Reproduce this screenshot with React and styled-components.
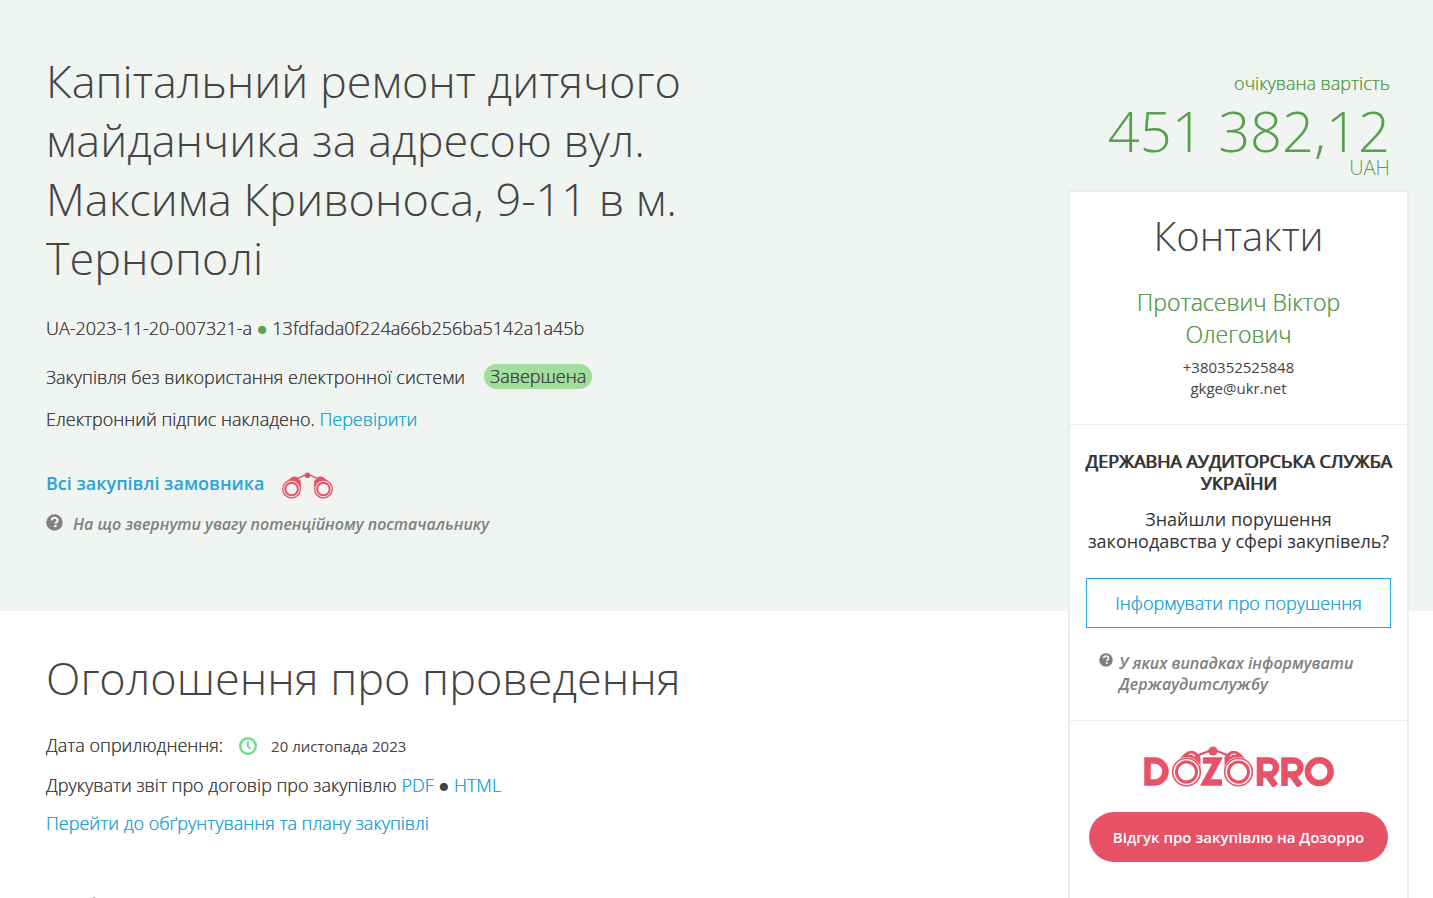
import React from "react";
import styled, { createGlobalStyle, css } from "styled-components";

const GlobalStyle = createGlobalStyle`
  *, *::before, *::after { box-sizing: border-box; }
  body {
    margin: 0;
    background: #fff;
    color: #444;
    font: 400 18px/22px "Open Sans", "Noto Sans", sans-serif;
  }
  h1, h2, h3, p { margin: 0; }
  a { color: #28a4da; text-decoration: none; }
  svg { display: block; flex: none; }
`;

const display = css`
  font-weight: 300;
`;

/* Light face, darkened slightly so it stays readable at text sizes. */
const bodyText = css`
  font-weight: 300;
  text-shadow: 0 0 currentColor;
`;

const Page = styled.div`
  display: grid;
  grid-template-columns: minmax(0, 1fr) 341px;
  grid-template-rows: auto 1fr;
  min-height: 100vh;
  padding-right: 24px;
`;

const HeroBand = styled.div`
  grid-column: 1 / -1;
  grid-row: 1;
  margin-right: -24px;
  background: #f0f5f1;
`;

const Hero = styled.header`
  grid-column: 1;
  grid-row: 1;
  padding: 51px 40px 76px 46px;
`;

const Details = styled.main`
  grid-column: 1;
  grid-row: 2;
  padding: 37px 40px 40px 46px;
`;

const Aside = styled.aside`
  grid-column: 2;
  grid-row: 1 / 3;
  display: flex;
  flex-direction: column;
  padding-top: 72px;
`;

const Title = styled.h1`
  ${display}
  max-width: 660px;
  margin-bottom: 30px;
  font-size: 45px;
  line-height: 59px;
`;

const SectionTitle = styled.h2`
  ${display}
  margin-bottom: ${(p) => p.$gap || 0}px;
  font-size: ${(p) => p.$size || 45}px;
  line-height: 59px;
`;

const Line = styled.p`
  ${bodyText}
  display: flex;
  align-items: ${(p) => p.$align || "center"};
  margin-bottom: ${(p) => p.$gap}px;
  white-space: pre-wrap;
`;

const Dot = styled.span`
  color: ${(p) => (p.$green ? "#5a9f4f" : "inherit")};
`;

const Status = styled.span`
  margin-left: 19px;
  padding: 1px 6px 2px;
  border-radius: 13px;
  background: #a3dd9b;
`;

const OwnerLink = styled.a`
  margin-right: 18px;
  font-weight: 600;
  text-shadow: none;
`;

const Hint = styled.a`
  display: flex;
  align-items: flex-start;
  gap: ${(p) => p.$gap}px;
  padding-left: ${(p) => p.$inset || 0}px;
  color: #808080;
  font-size: 16px;
  font-style: italic;
  font-weight: 600;
  line-height: 21px;
  text-align: left;
`;

const Published = styled.span`
  display: flex;
  align-items: center;
  gap: 14px;
  margin-left: 16px;
  padding-top: 2px;
  font-size: 15px;
  font-weight: 400;
  text-shadow: none;
`;

const Value = styled.div`
  padding-right: 19px;
  color: #5a9f4f;
  text-align: right;
`;

const Expected = styled.div`
  ${bodyText}
  margin-bottom: 9px;
`;

const Amount = styled.div`
  ${display}
  font-size: 56px;
  line-height: 54px;
`;

const Currency = styled.div`
  ${display}
  font-size: 20px;
`;

const Card = styled.div`
  flex: 1;
  margin-top: 11px;
  border: 2px solid #ececec;
  background: #fff;
  text-align: center;
`;

const Block = styled.section`
  padding: ${(p) => p.$pad};
  & + & { border-top: 1px solid #ececec; }
`;

const CardTitle = styled.h2`
  ${display}
  margin-bottom: 24px;
  font-size: 40px;
  line-height: 52px;
`;

const Person = styled.h3`
  ${bodyText}
  margin-bottom: 7px;
  color: #5a9f4f;
  font-size: 23px;
  line-height: 32px;
`;

const Contact = styled.p`
  font-size: 15px;
  line-height: 21px;
`;

const Agency = styled.h3`
  margin: 0 -6px 14px;
  color: #333;
  font-size: 18px;
  font-weight: 400;
  line-height: 22px;
  text-shadow: 1px 0 currentColor;
`;

const Question = styled.p`
  margin-bottom: 26px;
  color: #333;
`;

const buttonBase = css`
  width: 100%;
  height: 50px;
  font-family: inherit;
  cursor: pointer;
`;

const InformButton = styled.button`
  ${buttonBase}
  ${bodyText}
  margin-bottom: 25px;
  border: 1px solid #28a4da;
  background: #fff;
  color: #28a4da;
  font-size: 18px;
`;

const ReviewButton = styled.button`
  ${buttonBase}
  border: 0;
  border-radius: 25px;
  background: #e85267;
  color: #fff;
  font-size: 15px;
  font-weight: 600;
`;

const LogoWrap = styled.a`
  display: flex;
  justify-content: center;
  margin-bottom: 25px;
`;

function QuestionIcon({ size }) {
  return (
    <svg width={size} height={size} viewBox="0 0 18 18" aria-hidden="true">
      <circle cx="9" cy="9" r="8.7" fill="#808080" />
      <path d="M6 6.700C6.200 4.800 7.500 4 9.100 4c1.900 0 3.200 1 3.200 2.700 0 2.200-2.300 2.100-2.300 3.600" fill="none" stroke="#f4f7f5" strokeWidth="2.200" />
      <rect x="8.700" y="11.600" width="2.500" height="2.400" fill="#f4f7f5" />
    </svg>
  );
}

function ClockIcon() {
  return (
    <svg width="18" height="18" viewBox="0 0 18 18" fill="none" stroke="#6fdb8c" aria-hidden="true">
      <circle cx="9" cy="9" r="7.800" strokeWidth="2.400" />
      <path d="M8.900 4.300v5l2.700 2.800" strokeWidth="2" />
    </svg>
  );
}

function Binoculars() {
  return (
    <svg width="51" height="27" viewBox="0 0 51 27" role="img" aria-label="Dozorro">
      <g fill="none" stroke="#e85267">
        <path d="M2 12 8 6.500q4-3.500 8-.5l2.800 3v9H10z" fill="#e85267" stroke="none" />
        <path d="m49 12-6-5.500q-4-3.500-8-.5l-2.800 3v9H41z" fill="#e85267" stroke="none" />
        <path d="M15 6.400q4-1 7-3h7q3 2 7 3" strokeWidth="1.500" />
        <circle cx="9.600" cy="17" r="8.900" fill="#f0f5f1" strokeWidth="1.300" />
        <circle cx="41.400" cy="17" r="8.900" fill="#f0f5f1" strokeWidth="1.300" />
        <circle cx="9.600" cy="17" r="6.300" strokeWidth="2" />
        <circle cx="41.400" cy="17" r="6.300" strokeWidth="2" />
      </g>
      <circle cx="25.500" cy="3.200" r="2.800" fill="#e85267" />
    </svg>
  );
}

function DozorroLogo() {
  return (
    <svg width="190" height="41" viewBox="0 0 190 41" role="img" aria-label="DOZORRO">
      <g fill="none" stroke="#e85267">
        <path d="M3.500 14.500h7a11 11 0 0 1 0 22h-7z" strokeWidth="6.500" />
        <path d="M59 14.500h14.500L61.500 36.500H78" strokeWidth="6.500" />
        <path d="M116 40V14.500h9a6.500 6.500 0 0 1 0 14h-9M123 28l8.500 12" strokeWidth="6.500" />
        <path d="M140.500 40V14.500h9a6.500 6.500 0 0 1 0 14h-9M147.500 28l8.500 12" strokeWidth="6.500" />
        <circle cx="175.300" cy="25.700" r="11.400" strokeWidth="6.500" />
        <path d="M29 20 40 8q7-6 13-1l3.500 4v15H45z" fill="#e85267" stroke="none" />
        <path d="M108 20 97 8q-7-6-13-1l-3.500 4v15H92z" fill="#e85267" stroke="none" />
        <path d="M45 8.500q4-1.500 6 2M92 8.500q-4-1.500-6 2" stroke="#fff" strokeWidth="1.200" />
        <path d="M52 10q6-2 13-5h8q7 3 13 5" strokeWidth="2.200" />
        <circle cx="42.500" cy="26" r="15" fill="#fff" stroke="none" />
        <circle cx="94.500" cy="26" r="15" fill="#fff" stroke="none" />
        <circle cx="42.500" cy="26" r="13.800" strokeWidth="1.600" />
        <circle cx="94.500" cy="26" r="13.800" strokeWidth="1.600" />
        <circle cx="42.500" cy="26" r="10" strokeWidth="3" />
        <circle cx="94.500" cy="26" r="10" strokeWidth="3" />
      </g>
      <circle cx="69" cy="5" r="4.600" fill="#e85267" />
    </svg>
  );
}

export default function App() {
  return (
    <>
      <GlobalStyle />
      <Page>
        <HeroBand />
        <Hero>
          <Title>Капітальний ремонт дитячого майданчика за адресою вул. Максима Кривоноса, 9-11 в м. Тернополі</Title>
          <Line $gap={25}>
            <span>UA-2023-11-20-007321-a <Dot $green>●</Dot> 13fdfada0f224a66b256ba5142a1a45b</span>
          </Line>
          <Line $gap={19}>
            Закупівля без використання електронної системи<Status>Завершена</Status>
          </Line>
          <Line $gap={42}>
            Електронний підпис накладено. <a href="#sign">Перевірити</a>
          </Line>
          <Line $gap={15} $align="flex-start">
            <OwnerLink href="#owner">Всі закупівлі замовника</OwnerLink>
            <Binoculars />
          </Line>
          <Hint href="#hint" $gap={10}>
            <QuestionIcon size={17} />
            На що звернути увагу потенційному постачальнику
          </Hint>
        </Hero>
        <Details>
          <SectionTitle $gap={26}>Оголошення про проведення</SectionTitle>
          <Line $gap={17}>
            Дата оприлюднення:
            <Published><ClockIcon />20 листопада 2023</Published>
          </Line>
          <Line $gap={16}>
            <span>Друкувати звіт про договір про закупівлю <a href="#pdf">PDF</a> <Dot>●</Dot> <a href="#html">HTML</a></span>
          </Line>
          <Line $gap={49}>
            <a href="#plan">Перейти до обґрунтування та плану закупівлі</a>
          </Line>
          <SectionTitle $size={40}>Інформація про замовника</SectionTitle>
        </Details>
        <Aside>
          <Value>
            <Expected>очікувана вартість</Expected>
            <Amount>451 382,12</Amount>
            <Currency>UAH</Currency>
          </Value>
          <Card>
            <Block $pad="18px 16px 25px">
              <CardTitle>Контакти</CardTitle>
              <Person>Протасевич Віктор Олегович</Person>
              <Contact>+380352525848</Contact>
              <Contact>gkge@ukr.net</Contact>
            </Block>
            <Block $pad="25px 16px 25px">
              <Agency>ДЕРЖАВНА АУДИТОРСЬКА СЛУЖБА УКРАЇНИ</Agency>
              <Question>Знайшли порушення законодавства у сфері закупівель?</Question>
              <InformButton type="button">Інформувати про порушення</InformButton>
              <Hint href="#audit" $gap={6} $inset={13}>
                <QuestionIcon size={14} />
                У яких випадках інформувати Держаудитслужбу
              </Hint>
            </Block>
            <Block $pad="25px 19px 36px">
              <LogoWrap href="#dozorro"><DozorroLogo /></LogoWrap>
              <ReviewButton type="button">Відгук про закупівлю на Дозорро</ReviewButton>
            </Block>
          </Card>
        </Aside>
      </Page>
    </>
  );
}
